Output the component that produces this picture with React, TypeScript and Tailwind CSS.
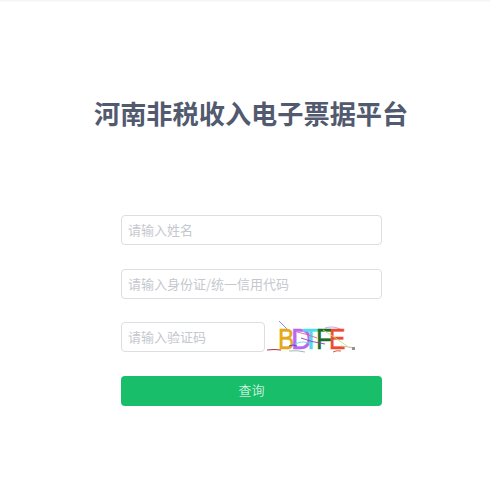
const fontStack = '"Noto Sans CJK SC", "Liberation Sans", sans-serif';

const letterFont = "Liberation Sans, sans-serif";

const letters = [
  { ch: "B", x: 11, sx: 0.85, color: "#e5a913" },
  { ch: "D", x: 24, sx: 1, color: "#b967ee" },
  { ch: "T", x: 35.5, sx: 0.95, color: "#4fdcea" },
  { ch: "F", x: 49, sx: 0.9, color: "#1f6b2a" },
  { ch: "E", x: 62, sx: 0.85, color: "#f0492f" },
];

const Captcha = () => (
  <svg width="90" height="30" viewBox="0 0 90 30" className="block overflow-visible">
    <path d="M12 -1 L23 10" stroke="#7a6cf0" strokeWidth="0.8" fill="none" />
    <path d="M0 28 Q7 27 14 28" stroke="#a8324a" strokeWidth="1" fill="none" />
    <path d="M22 29 Q30 28 38 30" stroke="#8fb5a8" strokeWidth="0.9" fill="none" />
    <path d="M66 30 Q70 28 74 29" stroke="#d2472f" strokeWidth="0.9" fill="none" />
    <path d="M58 6 Q68 3 76 9" stroke="#c9a8e8" strokeWidth="1.2" fill="none" />
    {letters.map((l) => (
      <text
        key={l.ch}
        transform={`translate(${l.x} 27) scale(${l.sx} 1)`}
        fontSize="29"
        fill={l.color}
        stroke={l.color}
        strokeWidth="0.5"
        fontFamily={letterFont}
      >
        {l.ch}
      </text>
    ))}
    <path d="M30 10 Q40 12 50 16" stroke="#e05fa0" strokeWidth="0.9" fill="none" />
    <path d="M34 16 Q44 20 58 22" stroke="#8a3fb0" strokeWidth="0.9" fill="none" />
    <path d="M56 8 Q66 14 80 24" stroke="#b8e86a" strokeWidth="0.9" fill="none" />
    <path d="M28 22 Q36 18 44 22" stroke="#6ad8e8" strokeWidth="0.9" fill="none" />
    <path d="M22 24 Q26 22 30 24" stroke="#3b3fd8" strokeWidth="0.9" fill="none" />
    <path d="M74 24 Q82 25 88 26" stroke="#cdb99a" strokeWidth="1.2" fill="none" />
    <rect x="85" y="25" width="3" height="3" fill="#9a8f8f" />
  </svg>
);

const inputClass =
  "h-[30px] rounded-[4px] border border-[#dcdee2] bg-white px-[6px] pb-[2px] text-[13px] text-[#515a6e] outline-none placeholder:text-[#c5c8ce]";

export default function App() {
  return (
    <div
      className="min-h-[500px] bg-white pt-[95px] shadow-[inset_0_2px_2px_-1px_#f0f0f0]"
      style={{ fontFamily: fontStack }}
    >
      <h1 className="ml-[94px] text-[26.2px] leading-[36px] font-bold text-[#515a6e]">
        河南非税收入电子票据平台
      </h1>
      <form className="mt-[84px] ml-[121px] flex w-[261px] flex-col">
        <input className={`${inputClass} w-full`} placeholder="请输入姓名" />
        <input className={`${inputClass} mt-[24px] w-full`} placeholder="请输入身份证/统一信用代码" />
        <div className="mt-[23px] flex items-center gap-[2px]">
          <input className={`${inputClass} w-[144px]`} placeholder="请输入验证码" />
          <Captcha />
        </div>
        <button
          type="button"
          className="mt-[24px] h-[30px] w-full rounded-[4px] bg-[#19be6b] pb-[2px] text-[13px] font-light text-white"
        >
          查询
        </button>
      </form>
    </div>
  );
}
